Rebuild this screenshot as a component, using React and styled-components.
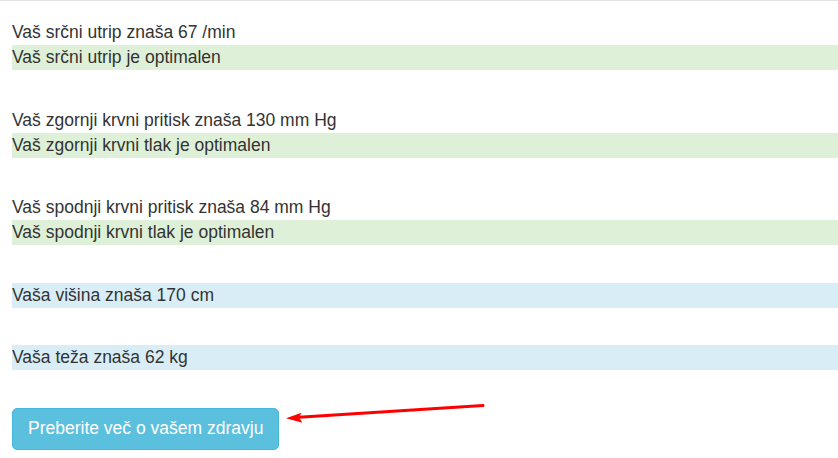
import React from "react";
import styled, { createGlobalStyle } from "styled-components";

const GlobalStyle = createGlobalStyle`
  html, body {
    margin: 0;
    padding: 0;
    background: #fff;
  }
  body {
    font-family: "Liberation Sans", Arial, sans-serif;
    font-size: 17.5px;
    line-height: 25px;
    color: #333;
  }
`;

const Page = styled.div`
  border-top: 1px solid #e3e3e3;
  padding: 19px 0 0 12px;
  overflow: hidden;
`;

const Group = styled.section`
  margin-bottom: 37.5px;
`;

const Reading = styled.div`
  height: 25px;
`;

const Band = styled.div`
  height: 25px;
  background-color: ${(p) => (p.$tone === "info" ? "#d9edf7" : "#dff0d8")};
`;

const ButtonRow = styled.div`
  position: relative;
  display: flex;
`;

const InfoButton = styled.button`
  font-family: "Liberation Sans", Arial, sans-serif;
  font-size: 17.5px;
  line-height: 25px;
  color: #fff;
  background-color: #5bc0de;
  border: 1px solid #46b8da;
  border-radius: 5px;
  padding: 7.5px 15px 7.5px 15px;
  cursor: pointer;
`;

const Arrow = styled.svg`
  position: absolute;
  left: 272px;
  top: -6px;
  overflow: visible;
`;

const results = [
  {
    reading: "Vaš srčni utrip znaša 67 /min",
    verdict: "Vaš srčni utrip je optimalen",
    tone: "success",
  },
  {
    reading: "Vaš zgornji krvni pritisk znaša 130 mm Hg",
    verdict: "Vaš zgornji krvni tlak je optimalen",
    tone: "success",
  },
  {
    reading: "Vaš spodnji krvni pritisk znaša 84 mm Hg",
    verdict: "Vaš spodnji krvni tlak je optimalen",
    tone: "success",
  },
  { verdict: "Vaša višina znaša 170 cm", tone: "info" },
  { verdict: "Vaša teža znaša 62 kg", tone: "info" },
];

export default function App() {
  return (
    <>
      <GlobalStyle />
      <Page>
        {results.map((r, i) => (
          <Group key={i}>
            {r.reading && <Reading>{r.reading}</Reading>}
            <Band $tone={r.tone}>{r.verdict}</Band>
          </Group>
        ))}
        <ButtonRow>
          <InfoButton>Preberite več o vašem zdravju</InfoButton>
          <Arrow width="204" height="24" viewBox="0 0 204 24">
            <line x1="15" y1="15.3" x2="199" y2="3.5" stroke="#ff0000" strokeWidth="3" strokeLinecap="round" />
            <polygon points="2,16.2 18.3,20.7 15,15.3 17.6,10.7" fill="#ff0000" />
          </Arrow>
        </ButtonRow>
      </Page>
    </>
  );
}
